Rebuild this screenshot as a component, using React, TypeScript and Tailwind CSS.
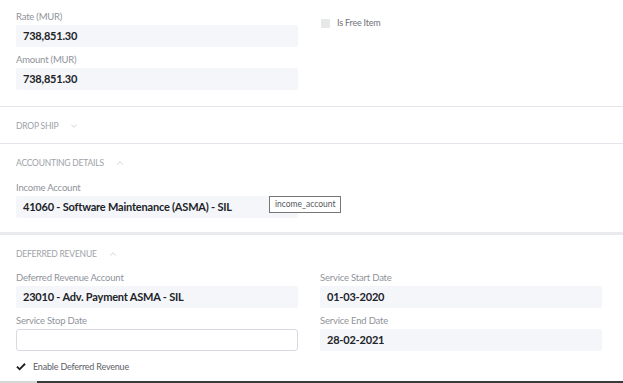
import { ChevronDown, ChevronUp } from "lucide-react";

function Field({ label, value }: { label: string; value?: string }) {
	return (
		<div className="flex flex-col">
			<div className="mb-px h-[14px] text-[9.5px] leading-[14px] tracking-[-0.2px] text-[#8f939a]">
				{label}
			</div>
			{value !== undefined ? (
				<div className="flex h-[22px] items-center rounded-[2px] bg-[#f5f6f9] px-[7px] text-[11px] font-bold tracking-[-0.2px] text-[#202328]">
					{value}
				</div>
			) : (
				<div className="h-[22px] rounded-[3px] border border-[#d7dae0] bg-white" />
			)}
		</div>
	);
}

function SectionHeader({ title, open }: { title: string; open: boolean }) {
	return (
		<div className="flex h-[14px] items-center gap-[11px] text-[8.5px] uppercase tracking-[-0.2px] text-[#9da2a9]">
			<span>{title}</span>
			{open ? (
				<ChevronUp className="h-[10px] w-[10px] text-[#b5b9bf]" strokeWidth={1.5} />
			) : (
				<ChevronDown className="h-[10px] w-[10px] text-[#b5b9bf]" strokeWidth={1.5} />
			)}
		</div>
	);
}

export default function App() {
	return (
		<div className="flex h-[383px] w-[623px] flex-col overflow-hidden bg-white font-['Lato',sans-serif]">
			<div className="grid grid-cols-[282px_282px] gap-x-[22px] pl-4 pt-[10px]">
				<div className="flex flex-col gap-[6px]">
					<Field label="Rate (MUR)" value="738,851.30" />
					<Field label="Amount (MUR)" value="738,851.30" />
				</div>
				<div className="flex items-center gap-[7px] self-start pl-px pt-[8px]">
					<div className="h-[9px] w-[9px] rounded-[1px] bg-[#e6e7e9]" />
					<span className="text-[9px] leading-[10px] tracking-[-0.2px] text-[#6f737a]">
						Is Free Item
					</span>
				</div>
			</div>

			<div className="mt-[16px] h-px bg-[#e3e5ea]" />
			<div className="flex h-[36px] items-center pl-4 pt-[2px]">
				<SectionHeader title="Drop Ship" open={false} />
			</div>
			<div className="h-px bg-[#e3e5ea]" />

			<div className="pl-4 pt-[12px]">
				<SectionHeader title="Accounting Details" open />
				<div className="mt-[11px] flex items-start">
					<div className="w-[282px]">
						<Field label="Income Account" value="41060 - Software Maintenance (ASMA) - SIL" />
					</div>
					<div className="relative">
						<div className="absolute left-[-29px] top-[15px] flex h-[17px] items-center whitespace-nowrap border border-[#767676] bg-white px-[5px] text-[8.5px] text-[#555a60]">
							income_account
						</div>
					</div>
				</div>
			</div>

			<div className="mt-[14px] h-[3px] bg-[#e8eaee]" />

			<div className="pl-4 pt-[12px]">
				<SectionHeader title="Deferred Revenue" open />
				<div className="mt-[10px] grid grid-cols-[282px_282px] gap-x-[22px]">
					<div className="flex flex-col gap-[6px]">
						<Field label="Deferred Revenue Account" value="23010 - Adv. Payment ASMA - SIL" />
						<Field label="Service Stop Date" />
					</div>
					<div className="flex flex-col gap-[6px]">
						<Field label="Service Start Date" value="01-03-2020" />
						<Field label="Service End Date" value="28-02-2021" />
					</div>
				</div>
				<div className="mt-[9px] flex items-center gap-[7px] text-[9px] tracking-[-0.2px] text-[#5d6168]">
					<svg viewBox="0 0 10 8" className="h-[8px] w-[10px]" aria-hidden="true">
						<path d="M0.3 4.2 L1.6 2.9 L3.6 4.9 L8.4 0.1 L9.7 1.4 L3.6 7.5 Z" fill="#1e1e1e" />
					</svg>
					<span>Enable Deferred Revenue</span>
				</div>
			</div>

			<div className="mt-auto flex h-[2px]">
				<div className="w-[37px] bg-[#d6d6d6]" />
				<div className="flex-1 bg-[#3a3a3a]" />
			</div>
		</div>
	);
}
